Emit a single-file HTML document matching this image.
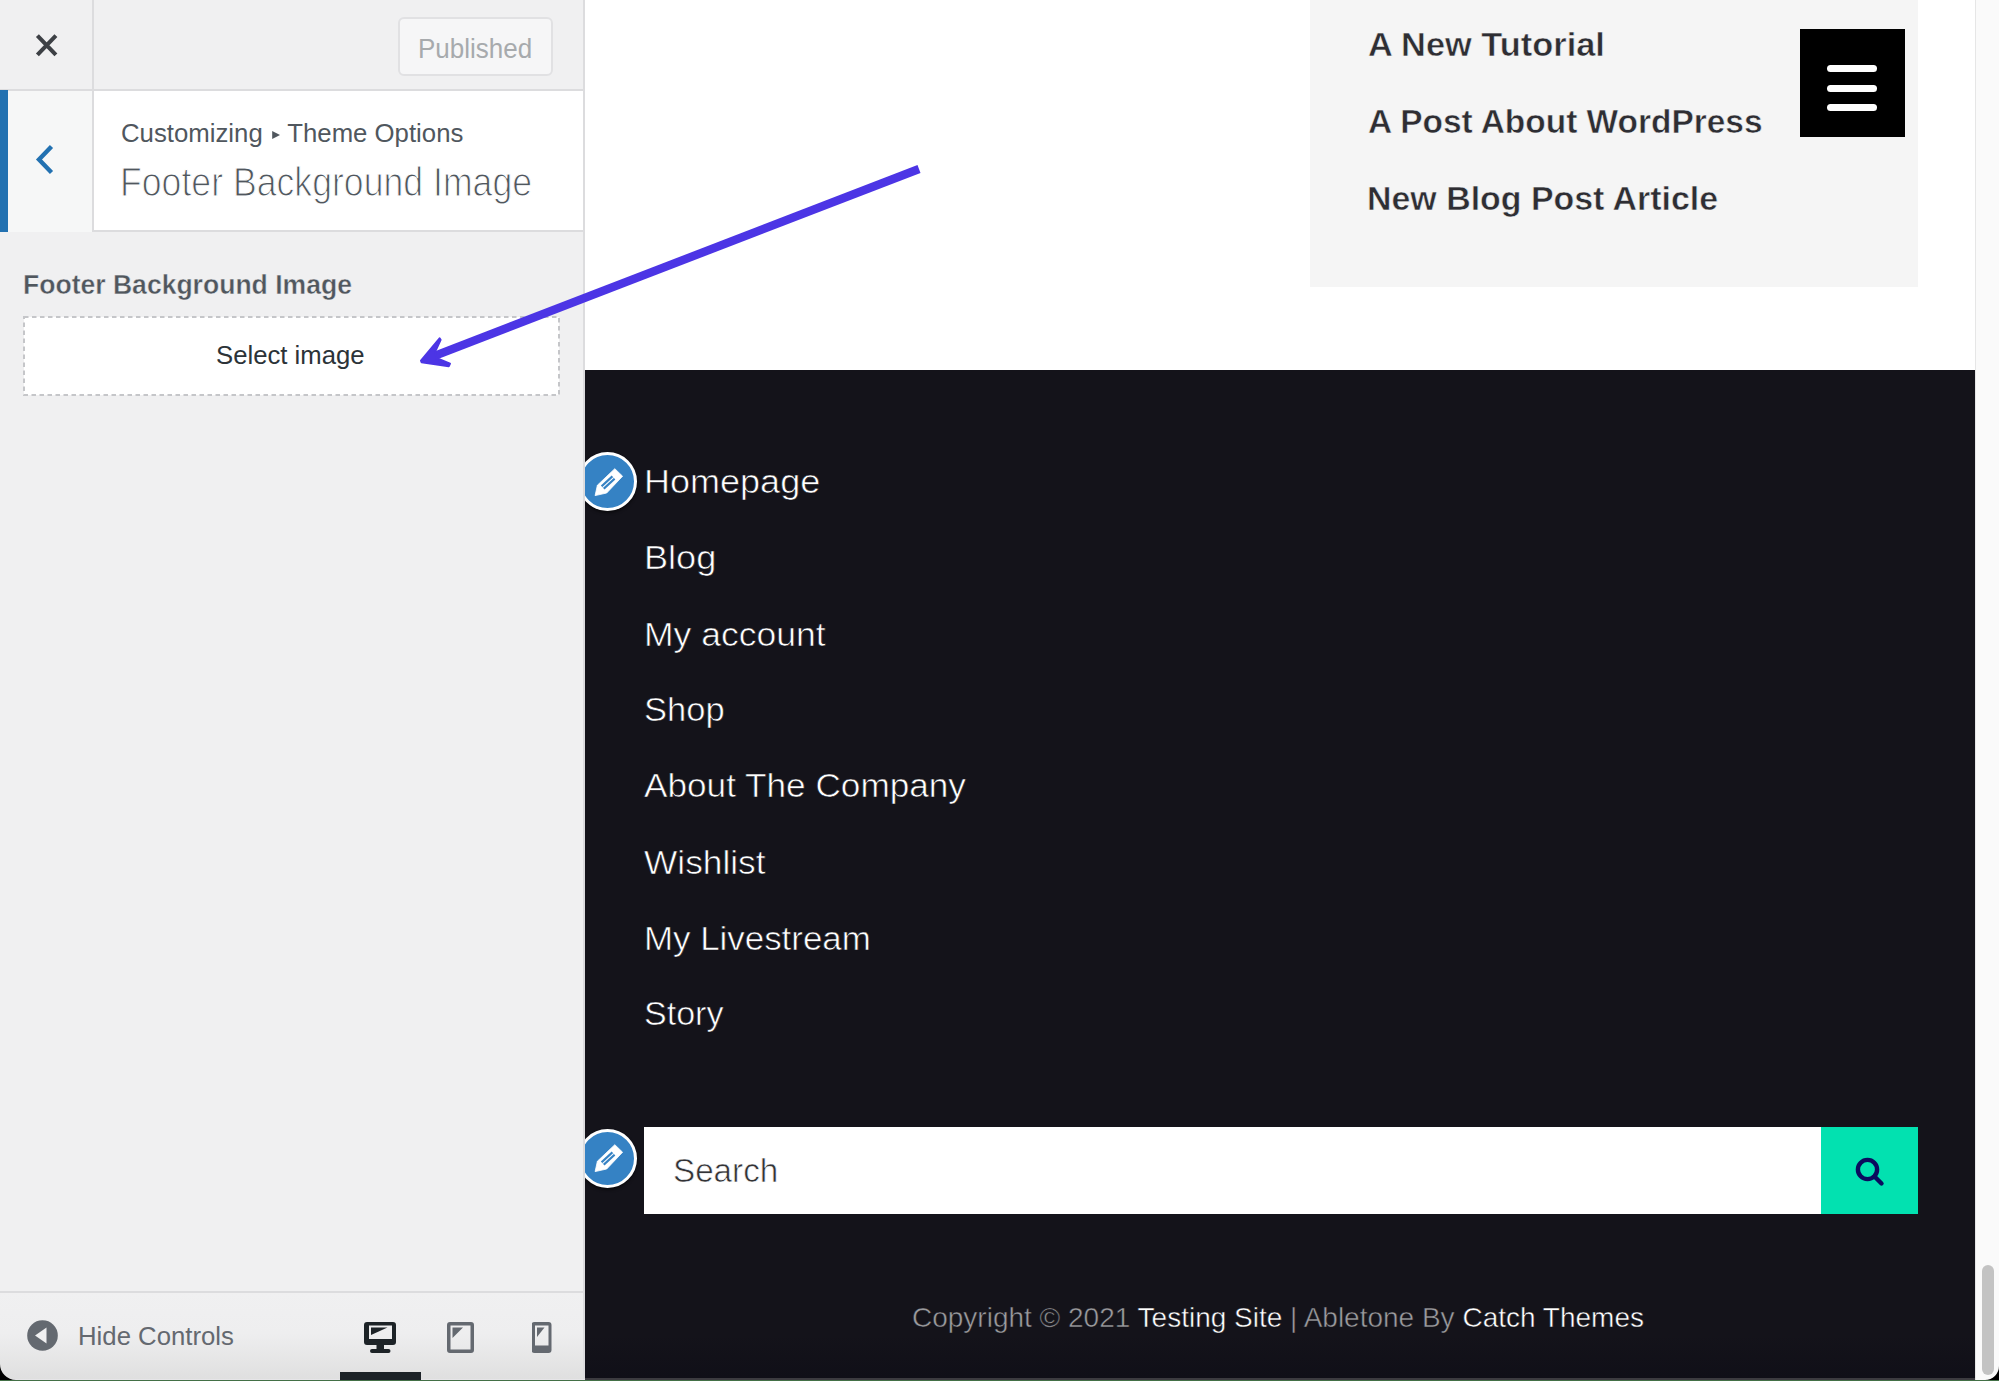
<!DOCTYPE html>
<html><head><meta charset="utf-8">
<style>
html,body{margin:0;padding:0;width:1999px;height:1381px;overflow:hidden;background:#000;}
body{position:relative;font-family:"Liberation Sans",sans-serif;}
.a{position:absolute;}
.t{position:absolute;white-space:nowrap;line-height:1;transform-origin:0 0;}
</style></head>
<body>
<!-- ============ SIDEBAR ============ -->
<div class="a" style="left:0;top:0;width:585px;height:1381px;background:#f0f0f1;"></div>
<!-- header -->
<div class="a" style="left:0;top:0;width:583px;height:89px;background:#f0f0f1;border-bottom:2px solid #dcdcde;"></div>
<div class="a" style="left:92px;top:0;width:2px;height:89px;background:#dcdcde;"></div>
<!-- close X -->
<svg class="a" style="left:30px;top:29px" width="34" height="34" viewBox="0 0 34 34"><path d="M7.4 6.7L25.9 25.9M25.9 6.7L7.4 25.9" stroke="#3d4045" stroke-width="4.1" stroke-linecap="butt"/></svg>
<!-- published button -->
<div class="a" style="left:398px;top:17px;width:151px;height:55px;border:2px solid #e1e1e3;border-radius:6px;background:#f6f6f7;"></div>
<div class="t" id="t_pub" style="left:418px;top:35.5px;font-size:27px;color:#a7aaad;transform:scaleX(0.963);">Published</div>

<!-- section title -->
<div class="a" style="left:0;top:91px;width:583px;height:139px;background:#fff;border-bottom:2px solid #dcdcde;"></div>
<div class="a" style="left:0;top:91px;width:92px;height:141px;background:#f6f7f7;"></div>
<div class="a" style="left:0;top:90px;width:8px;height:142px;background:#2271b1;"></div>
<div class="a" style="left:92px;top:91px;width:2px;height:141px;background:#dcdcde;"></div>
<svg class="a" style="left:30px;top:140px" width="30" height="40" viewBox="0 0 30 40"><path d="M21.5 6.5L9 19.5L21.5 32.5" fill="none" stroke="#2271b1" stroke-width="4.4"/></svg>
<div class="t" id="t_cust" style="left:120.8px;top:120px;font-size:26.5px;color:#50575e;transform:scaleX(0.972);">Customizing <span style="font-size:14px;position:relative;top:-3px;color:transparent;">&#9654;</span> Theme Options</div>
<svg class="a" style="left:270px;top:129px" width="12" height="12" viewBox="0 0 12 12"><path d="M2.2 2L10 6L2.2 10Z" fill="#50575e"/></svg>
<div class="t" id="t_title" style="left:120.3px;top:162px;font-size:40px;color:#50575e;-webkit-text-stroke:1.1px #fff;transform:scaleX(0.891);">Footer Background Image</div>

<!-- control -->
<div class="t" id="t_label" style="left:23px;top:271px;font-size:28px;font-weight:bold;color:#50575e;-webkit-text-stroke:0.4px #f0f0f1;transform:scaleX(0.948);">Footer Background Image</div>
<svg class="a" style="left:23px;top:316px" width="537" height="80" viewBox="0 0 537 80"><rect x="1" y="1" width="535" height="78" fill="#fff" stroke="#c5c6c9" stroke-width="2" stroke-dasharray="4.5 3.5"/></svg>
<div class="t" id="t_sel" style="left:216px;top:343px;font-size:25.7px;color:#2c3338;">Select image</div>

<!-- footer actions -->
<div class="a" style="left:0;top:1291px;width:583px;height:90px;background:linear-gradient(#f0f0f1,#eeeeef 45%,#dedede);border-top:2px solid #dcdcde;"></div>
<svg class="a" style="left:27px;top:1320px" width="31" height="31" viewBox="0 0 31 31"><circle cx="15.5" cy="15.5" r="15.3" fill="#646970"/><path d="M8 15.5L19.5 7.5V23.5Z" fill="#f0f0f1"/></svg>
<div class="t" id="t_hide" style="left:78px;top:1323px;font-size:26.3px;color:#646970;transform:scaleX(0.979);">Hide Controls</div>
<!-- desktop icon -->
<svg class="a" style="left:364px;top:1321px" width="34" height="33" viewBox="0 0 34 33">
<path fill="#1d2327" d="M3 1h26a3 3 0 0 1 3 3v17a3 3 0 0 1-3 3H20v4h4.5a2 2 0 0 1 0 4H8a2 2 0 0 1 0-4h4.5v-4H3a3 3 0 0 1-3-3V4a3 3 0 0 1 3-3zM5 4.5v13.5h23V4.5z"/>
<path fill="#1d2327" d="M7 6.5H23.5L7 14z"/>
</svg>
<div class="a" style="left:340px;top:1372px;width:81px;height:9px;background:#1d2327;"></div>
<!-- tablet icon -->
<svg class="a" style="left:447px;top:1321px" width="28" height="33" viewBox="0 0 28 33">
<path fill="#646970" d="M3 1h21a3 3 0 0 1 3 3v25a3 3 0 0 1-3 3H3a3 3 0 0 1-3-3V4a3 3 0 0 1 3-3zM3.5 4.5v24h20v-24z"/>
<path fill="#646970" d="M5.5 6.5H16L5.5 17z"/>
</svg>
<!-- phone icon -->
<svg class="a" style="left:532px;top:1321px" width="20" height="33" viewBox="0 0 20 33">
<path fill="#646970" d="M2.5 1h14a3 3 0 0 1 3 3v25a3 3 0 0 1-3 3h-14a3 3 0 0 1-3-3V4a3 3 0 0 1 3-3zM3 4.5v20h13.5v-20z"/>
<path fill="#646970" d="M5 6.5H12.5L5 16z"/>
</svg>
<!-- sidebar right edge -->
<div class="a" style="left:583px;top:0;width:2px;height:1381px;background:#dcdcde;"></div>

<!-- ============ PREVIEW ============ -->
<div class="a" style="left:585px;top:0;width:1390px;height:370px;background:#fff;"></div>
<div class="a" style="left:1310px;top:0;width:608px;height:287px;background:#f5f5f5;"></div>
<div class="t" id="t_p1" style="left:1367.7px;top:29px;font-size:32.7px;font-weight:bold;color:#2e2e33;-webkit-text-stroke:0.5px #f5f5f5;transform:scaleX(1.052);">A New Tutorial</div>
<div class="t" id="t_p2" style="left:1368px;top:106px;font-size:32.7px;font-weight:bold;color:#2e2e33;-webkit-text-stroke:0.5px #f5f5f5;transform:scaleX(1.023);">A Post About WordPress</div>
<div class="t" id="t_p3" style="left:1367.1px;top:183px;font-size:32.7px;font-weight:bold;color:#2e2e33;-webkit-text-stroke:0.5px #f5f5f5;transform:scaleX(1.0375);">New Blog Post Article</div>
<div class="a" style="left:1800px;top:29px;width:105px;height:108px;background:#000;"></div>
<div class="a" style="left:1827px;top:65px;width:50px;height:7px;border-radius:4px;background:#fff;"></div>
<div class="a" style="left:1827px;top:85px;width:50px;height:7px;border-radius:4px;background:#fff;"></div>
<div class="a" style="left:1827px;top:104px;width:50px;height:7px;border-radius:4px;background:#fff;"></div>

<!-- footer -->
<div class="a" style="left:585px;top:370px;width:1390px;height:1011px;background:#14131a;"></div>
<div class="t" id="t_m1" style="left:643.5px;top:466px;font-size:32.7px;color:#fff;-webkit-text-stroke:0.6px #14131a;transform:scaleX(1.102);">Homepage</div>
<div class="t" id="t_m2" style="left:643.5px;top:542px;font-size:32.7px;color:#fff;-webkit-text-stroke:0.6px #14131a;transform:scaleX(1.105);">Blog</div>
<div class="t" id="t_m3" style="left:643.5px;top:619px;font-size:32.7px;color:#fff;-webkit-text-stroke:0.6px #14131a;transform:scaleX(1.086);">My account</div>
<div class="t" id="t_m4" style="left:643.5px;top:693.5px;font-size:32.7px;color:#fff;-webkit-text-stroke:0.6px #14131a;transform:scaleX(1.057);">Shop</div>
<div class="t" id="t_m5" style="left:643.5px;top:770px;font-size:32.7px;color:#fff;-webkit-text-stroke:0.6px #14131a;transform:scaleX(1.076);">About The Company</div>
<div class="t" id="t_m6" style="left:643.5px;top:846.5px;font-size:32.7px;color:#fff;-webkit-text-stroke:0.6px #14131a;transform:scaleX(1.079);">Wishlist</div>
<div class="t" id="t_m7" style="left:643.5px;top:923px;font-size:32.7px;color:#fff;-webkit-text-stroke:0.6px #14131a;transform:scaleX(1.067);">My Livestream</div>
<div class="t" id="t_m8" style="left:643.5px;top:998px;font-size:32.7px;color:#fff;-webkit-text-stroke:0.6px #14131a;transform:scaleX(1.042);">Story</div>

<div class="a" style="left:644px;top:1127px;width:1177px;height:87px;background:#fff;"></div>
<div class="a" style="left:1821px;top:1127px;width:97px;height:87px;background:#02e1b0;"></div>
<svg class="a" style="left:1850px;top:1152px" width="40" height="40" viewBox="0 0 40 40"><circle cx="17.5" cy="17.5" r="9.6" fill="none" stroke="#0b0b5e" stroke-width="4.4"/><path d="M24.5 24.5L31.5 31.5" stroke="#0b0b5e" stroke-width="4.4" stroke-linecap="round"/></svg>
<div class="t" id="t_search" style="left:672.5px;top:1155px;font-size:32.4px;color:#333336;-webkit-text-stroke:0.6px #fff;transform:scaleX(1.025);">Search</div>

<div class="t" id="t_copy" style="left:912px;top:1304px;font-size:28px;color:#9b9b9e;-webkit-text-stroke:0.5px #14131a;">Copyright &copy; 2021 <span style="color:#fff">Testing Site</span> | Abletone By <span style="color:#fff">Catch Themes</span></div>

<!-- edit shortcuts -->
<div class="a" style="left:585px;top:440px;width:70px;height:100px;overflow:hidden;">
  <div class="a" style="left:-7px;top:12px;width:53px;height:53px;border-radius:50%;background:#3582c4;border:3px solid #fff;box-shadow:0 2px 3px rgba(0,0,0,.5);"></div>
  <svg class="a" style="left:8px;top:26px" width="32" height="32" viewBox="0 0 32 32"><path fill="#fff" d="M21.8 2.7L29.6 10.2L13.7 27L2.1 29.6L4.4 19.2Z" stroke="#fff" stroke-width="0.8" stroke-linejoin="round"/><path d="M9.7 21.5L20.5 11.5" stroke="#3582c4" stroke-width="5.4"/><path d="M9.5 21.7L20.7 11.3" stroke="#fff" stroke-width="1.1"/></svg>
</div>
<div class="a" style="left:585px;top:1117px;width:70px;height:100px;overflow:hidden;">
  <div class="a" style="left:-7px;top:12px;width:53px;height:53px;border-radius:50%;background:#3582c4;border:3px solid #fff;box-shadow:0 2px 3px rgba(0,0,0,.5);"></div>
  <svg class="a" style="left:8px;top:24.7px" width="32" height="32" viewBox="0 0 32 32"><path fill="#fff" d="M21.8 2.7L29.6 10.2L13.7 27L2.1 29.6L4.4 19.2Z" stroke="#fff" stroke-width="0.8" stroke-linejoin="round"/><path d="M9.7 21.5L20.5 11.5" stroke="#3582c4" stroke-width="5.4"/><path d="M9.5 21.7L20.7 11.3" stroke="#fff" stroke-width="1.1"/></svg>
</div>

<!-- scrollbar -->
<div class="a" style="left:1975px;top:0;width:24px;height:1381px;background:#fafafa;border-left:1px solid #e6e6e6;box-sizing:border-box;"></div>
<div class="a" style="left:1982px;top:1265px;width:12px;height:110px;border-radius:6px;background:#c3c3c3;"></div>

<!-- arrow annotation -->
<svg class="a" style="left:0;top:0" width="1999" height="1381" viewBox="0 0 1999 1381">
<path d="M919 169L432 356.8" stroke="#4c35e5" stroke-width="8.4"/>
<path d="M439.6 338.4L421 360.6L421.6 362.2L448.8 366.2L450 363.6L436.2 358L435.4 351L440.6 339.8Z" fill="#4c35e5" stroke="#4c35e5" stroke-width="2" stroke-linejoin="round"/>
</svg>

<div class="a" style="left:585px;top:1335px;width:1390px;height:44px;background:linear-gradient(rgba(8,8,16,0),rgba(8,8,20,.35));"></div>
<div class="a" style="left:0;top:1379px;width:340px;height:1px;background:#e6e5e8;"></div>
<div class="a" style="left:421px;top:1379px;width:164px;height:1px;background:#e6e5e8;"></div>
<div class="a" style="left:585px;top:1378px;width:1390px;height:2px;background:#3c3b40;"></div>
<!-- window corners -->
<svg class="a" style="left:0;top:0" width="1999" height="1381" viewBox="0 0 1999 1381">
<path d="M0 1364A16 16 0 0 0 16 1380L0 1380Z" fill="#000"/>
<path d="M1999 1366A14 14 0 0 1 1985 1380L1999 1380Z" fill="#000"/>
</svg>
<!-- window bottom line -->
<div class="a" style="left:0;top:1380px;width:1999px;height:1px;background:#437046;"></div>
</body></html>
